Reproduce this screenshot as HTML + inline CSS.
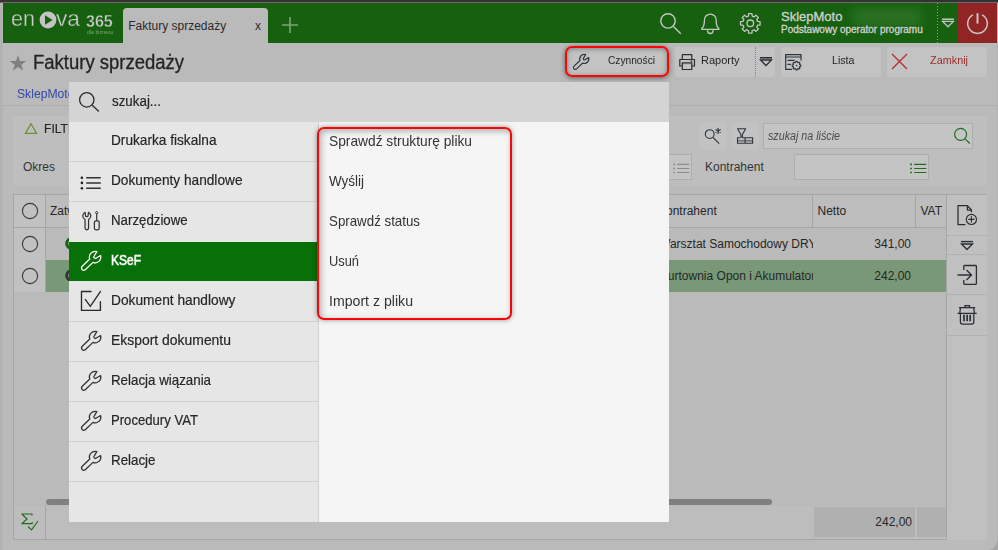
<!DOCTYPE html>
<html lang="pl"><head><meta charset="utf-8"><title>Faktury sprzedaży</title>
<style>
html,body{margin:0;padding:0;}
body{width:998px;height:550px;overflow:hidden;position:relative;background:#a6a6a6;font-family:"Liberation Sans", sans-serif;}
.a{position:absolute;box-sizing:border-box;}
.t{white-space:pre;display:block;}
svg{position:absolute;overflow:visible;}
</style></head><body>
<div class="a" style="left:3px;top:3px;width:994px;height:547px;background:#bababa;border-radius:0 0 9px 0;"></div>
<div class="a" style="left:0px;top:0px;width:998px;height:2px;background:#333333;"></div>
<div class="a" style="left:0px;top:2px;width:998px;height:1px;background:#6b696b;"></div>
<div class="a" style="left:3px;top:3px;width:994px;height:40px;background:#16600f;"></div>
<div class="a" style="left:852px;top:8px;width:70px;height:19px;background:rgba(62,128,54,0.5);filter:blur(5px);border-radius:6px;"></div>
<span class="t" style="position:absolute;left:11.40px;transform-origin:left top;top:7.95px;font-size:22.5px;line-height:22.5px;color:#cacaca;transform:scaleX(0.9588);-webkit-text-stroke:0.3px #16600f;">en</span>
<svg style="left:39px;top:11px;" width="18" height="18" viewBox="0 0 18 18"><circle cx="9" cy="9" r="8.4" fill="#c4c4c4"/><path d="M6 4.2 L13.6 9 L6 13.8 Z" fill="#16600f"/></svg>
<span class="t" style="position:absolute;left:55.80px;transform-origin:left top;top:7.95px;font-size:22.5px;line-height:22.5px;color:#cacaca;transform:scaleX(1.0099);-webkit-text-stroke:0.3px #16600f;">va</span>
<span class="t" style="position:absolute;left:86.20px;transform-origin:left top;top:13.66px;font-size:16px;line-height:16px;color:#cacaca;font-weight:700;transform:scaleX(1.0036);-webkit-text-stroke:0.35px #16600f;">365</span>
<span class="t" style="position:absolute;left:86.50px;transform-origin:left top;top:29.77px;font-size:5px;line-height:5px;color:#7da578;transform:scaleX(1.0476);">dla biznesu</span>
<div class="a" style="left:123px;top:8px;width:145px;height:35px;background:#bababa;border-radius:4px 4px 0 0;"></div>
<span class="t" style="position:absolute;left:128.20px;transform-origin:left top;top:19.84px;font-size:12px;line-height:12px;color:#2b2b2b;">Faktury sprzedaży</span>
<span class="t" style="position:absolute;left:255.00px;transform-origin:left top;top:19.84px;font-size:12px;line-height:12px;color:#2b2b2b;">x</span>
<svg style="left:281px;top:16px;" width="18" height="18" viewBox="0 0 18 18"><path d="M9 1 V17 M1 9 H17" stroke="#7fa57a" stroke-width="1.6" fill="none"/></svg>
<svg style="left:656px;top:10px;" width="28" height="26" viewBox="0 0 28 26"><circle cx="12" cy="10.9" r="7.2" fill="none" stroke="#c4c4c4" stroke-width="1.4"/><path d="M17.4 16.4 L24.8 23.8" stroke="#c4c4c4" stroke-width="1.4" fill="none"/></svg>
<svg style="left:698px;top:11px;" width="24" height="24" viewBox="0 0 24 24"><path d="M6.4 9 A5.9 5.9 0 0 1 18.2 9 L18.2 11 C18.4 14 19.5 16.5 20.8 17.6 L20.8 18.4 H3.8 L3.8 17.6 C5.1 16.5 6.2 14 6.4 11 Z M9.5 19.2 A2.8 3.3 0 0 0 15.1 19.2" fill="none" stroke="#c4c4c4" stroke-width="1.3" stroke-linejoin="round"/></svg>
<svg style="left:738px;top:10px;" width="26" height="26" viewBox="0 0 26 26"><path d="M22.05 11.60 L22.05 15.00 L19.56 15.17 L18.76 17.12 L20.40 18.99 L17.99 21.40 L16.12 19.76 L14.17 20.56 L14.00 23.05 L10.60 23.05 L10.43 20.56 L8.48 19.76 L6.61 21.40 L4.20 18.99 L5.84 17.12 L5.04 15.17 L2.55 15.00 L2.55 11.60 L5.04 11.43 L5.84 9.48 L4.20 7.61 L6.61 5.20 L8.48 6.84 L10.43 6.04 L10.60 3.55 L14.00 3.55 L14.17 6.04 L16.12 6.84 L17.99 5.20 L20.40 7.61 L18.76 9.48 L19.56 11.43 Z" fill="none" stroke="#c4c4c4" stroke-width="1.3" stroke-linejoin="round"/><circle cx="12.3" cy="13.3" r="3.3" fill="none" stroke="#c4c4c4" stroke-width="1.3"/></svg>
<span class="t" style="position:absolute;left:781.00px;transform-origin:left top;top:10.00px;font-size:13px;line-height:13px;color:#d2d2d2;-webkit-text-stroke:0.3px #d2d2d2;">SklepMoto</span>
<span class="t" style="position:absolute;left:781.00px;transform-origin:left top;top:24.54px;font-size:10px;line-height:10px;color:#d2d2d2;-webkit-text-stroke:0.3px #d2d2d2;">Podstawowy operator programu</span>
<div class="a" style="left:937px;top:3px;width:1px;height:40px;background:repeating-linear-gradient(to bottom, #86aa81 0px, #86aa81 1px, transparent 1px, transparent 3px);"></div>
<svg style="left:941px;top:16px;" width="16" height="12" viewBox="0 0 16 12"><path d="M1 3.2 H13" stroke="#c4c4c4" stroke-width="1.5"/><path d="M1.6 5.4 H12.4 L7 10.8 Z" fill="none" stroke="#c4c4c4" stroke-width="1.3"/></svg>
<div class="a" style="left:958px;top:3px;width:39px;height:40px;background:#912424;"></div>
<svg style="left:965px;top:11px;" width="26" height="26" viewBox="0 0 26 26"><path d="M7.9 3.95 A9.8 9.8 0 1 0 17.1 3.95" fill="none" stroke="#cfc3c3" stroke-width="1.5"/><path d="M12.5 2.2 V12.6" stroke="#cfc3c3" stroke-width="2"/></svg>
<div class="a" style="left:0px;top:3px;width:3px;height:547px;background:#b2b2b2;"></div>
<div class="a" style="left:996.5px;top:3px;width:1.5px;height:538px;background:#b2b2b2;"></div>
<svg style="left:9px;top:54px;" width="18" height="18" viewBox="0 0 18 18"><path d="M9.00 0.90 L11.00 6.90 L17.32 6.95 L12.23 10.70 L14.14 16.73 L9.00 13.05 L3.86 16.73 L5.77 10.70 L0.68 6.95 L7.00 6.90 Z" fill="#808080"/></svg>
<span class="t" style="position:absolute;left:33.20px;transform-origin:left top;top:52.96px;font-size:19.3px;line-height:19.3px;color:#242424;transform:scaleX(0.9585);-webkit-text-stroke:0.3px #242424;">Faktury sprzedaży</span>
<div class="a" style="left:567px;top:47px;width:101px;height:30px;background:#c3c3c3;border-radius:3px;"></div>
<div class="a" style="left:675px;top:47px;width:100px;height:30px;background:#c3c3c3;border-radius:3px;"></div>
<div class="a" style="left:781px;top:47px;width:100px;height:30px;background:#c3c3c3;border-radius:3px;"></div>
<div class="a" style="left:887px;top:47px;width:100px;height:30px;background:#c3c3c3;border-radius:3px;"></div>
<div class="a" style="left:564.7px;top:46.1px;width:104.59999999999991px;height:30.6px;border:2.8px solid #fb0505;border-radius:7px;box-shadow:0 1px 5px rgba(0,0,0,0.5), inset 0 1px 5px rgba(0,0,0,0.35);"></div>
<span class="t" style="position:absolute;left:607.60px;transform-origin:left top;top:55.27px;font-size:11.5px;line-height:11.5px;color:#262626;transform:scaleX(0.8857);">Czynności</span>
<span class="t" style="position:absolute;left:700.50px;transform-origin:left top;top:55.27px;font-size:11.5px;line-height:11.5px;color:#262626;transform:scaleX(0.9558);">Raporty</span>
<span class="t" style="position:absolute;left:832.00px;transform-origin:left top;top:55.27px;font-size:11.5px;line-height:11.5px;color:#262626;transform:scaleX(0.9260);">Lista</span>
<span class="t" style="position:absolute;left:929.50px;transform-origin:left top;top:55.27px;font-size:11.5px;line-height:11.5px;color:#9c2c2c;transform:scaleX(0.9437);">Zamknij</span>
<div class="a" style="left:755px;top:47px;width:1px;height:30px;border-left:1px dotted #858585;"></div>
<svg style="left:759px;top:56px;" width="14" height="11" viewBox="0 0 14 11"><path d="M1 1.8 H13" stroke="#2a2e33" stroke-width="1.6"/><path d="M1.5 4 H12.5 L7 9.5 Z" fill="none" stroke="#2a2e33" stroke-width="1.3"/></svg>
<svg style="left:573px;top:54px;" width="16" height="16" viewBox="0 0 20 20"><path d="M8.75 8.06 A5.7 5.7 0 0 1 15.84 0.67 L13.27 4.88 A1.45 1.45 0 0 0 15.29 6.97 L19.59 4.56 A5.7 5.7 0 0 1 11.94 11.38 L4.50 18.56 A2.3 2.3 0 0 1 1.30 15.24 Z" fill="none" stroke="#2c343c" stroke-width="1.5" stroke-linejoin="round"/></svg>
<svg style="left:679px;top:53px;" width="18" height="18" viewBox="0 0 18 18"><path d="M3.3 13 H0.8 V6.5 H15.5 V13 H12.8 M3.3 6.5 V1.6 H12.8 V6.5 M3.3 9.8 H12.8 V16.5 H3.3 Z M11.6 8.1 H13.2" fill="none" stroke="#2a2e33" stroke-width="1.2" stroke-linejoin="round"/><path d="M3.9 10.6 H12.2" stroke="#6a6e72" stroke-width="1"/></svg>
<svg style="left:785px;top:53px;" width="18" height="18" viewBox="0 0 18 18"><path d="M16 7.5 V1.6 H0.7 V16.4 H7 M0.7 4 H16 M2.5 7.3 H9.5 M2.5 11.3 H6" fill="none" stroke="#2c343c" stroke-width="1.2"/><path d="M15.74 11.86 L15.74 13.34 L14.79 13.45 L14.43 14.33 L15.02 15.07 L13.97 16.12 L13.23 15.53 L12.35 15.89 L12.24 16.84 L10.76 16.84 L10.65 15.89 L9.77 15.53 L9.03 16.12 L7.98 15.07 L8.57 14.33 L8.21 13.45 L7.26 13.34 L7.26 11.86 L8.21 11.75 L8.57 10.87 L7.98 10.13 L9.03 9.08 L9.77 9.67 L10.65 9.31 L10.76 8.36 L12.24 8.36 L12.35 9.31 L13.23 9.67 L13.97 9.08 L15.02 10.13 L14.43 10.87 L14.79 11.75 Z" fill="none" stroke="#2c343c" stroke-width="1.1" stroke-linejoin="round"/><circle cx="11.5" cy="12.6" r="0.8" fill="#2c343c"/></svg>
<svg style="left:891px;top:53px;" width="17" height="17" viewBox="0 0 17 17"><path d="M1 1 L16 16 M16 1 L1 16" stroke="#b23030" stroke-width="1.4"/></svg>
<span class="t" style="position:absolute;left:17.30px;transform-origin:left top;top:88.42px;font-size:12.5px;line-height:12.5px;color:#3347a8;transform:scaleX(0.9735);">SklepMoto</span>
<div class="a" style="left:3px;top:105px;width:994px;height:1px;background:#adadad;"></div>
<div class="a" style="left:13px;top:116px;width:974px;height:70px;background:#bebebe;border-radius:4px;"></div>
<svg style="left:23px;top:121px;" width="15" height="13" viewBox="0 0 15 13"><path d="M8 2.8 L13.6 12.4 H2.4 Z" fill="none" stroke="#6c8f30" stroke-width="1.2"/></svg>
<span class="t" style="position:absolute;left:44.00px;transform-origin:left top;top:121.74px;font-size:13.3px;line-height:13.3px;color:#262626;transform:scaleX(0.9085);-webkit-text-stroke:0.2px #262626;">FILTRY</span>
<span class="t" style="position:absolute;left:23.00px;transform-origin:left top;top:160.84px;font-size:12px;line-height:12px;color:#333;">Okres</span>
<div class="a" style="left:699px;top:122.5px;width:28px;height:26.5px;background:#c2c2c2;border-radius:2px;"></div>
<div class="a" style="left:732px;top:122.5px;width:26.5px;height:26.5px;background:#c2c2c2;border-radius:2px;"></div>
<svg style="left:703px;top:126px;" width="22" height="20" viewBox="0 0 22 20"><circle cx="6.7" cy="8.1" r="4.4" fill="none" stroke="#2c343c" stroke-width="1.1"/><path d="M9.9 11.3 L16.2 17.6" stroke="#2c343c" stroke-width="1.1"/><path d="M15.1 2 V8 M12.5 3.5 L17.7 6.5 M17.7 3.5 L12.5 6.5" stroke="#2c343c" stroke-width="1.1"/></svg>
<svg style="left:736px;top:126px;" width="20" height="20" viewBox="0 0 20 20"><path d="M1.6 2.7 H9.6 L6.4 8.6 V11.4 L4.9 10.4 V8.6 Z" fill="none" stroke="#2c343c" stroke-width="1.1" stroke-linejoin="round"/><path d="M1.9 13.9 H16.2 V15.6 H1.9 Z" fill="#707478"/><path d="M4.9 11.7 H1.5 V17.2 H16.6 V11.7 H6.4 M9.1 11.7 V17.2" fill="none" stroke="#2c343c" stroke-width="1.1"/></svg>
<div class="a" style="left:763px;top:123px;width:210px;height:26px;background:#c4c4c4;border:1px solid #aeaeae;"></div>
<span class="t" style="position:absolute;left:768.00px;transform-origin:left top;top:129.84px;font-size:12px;line-height:12px;color:#4c4c4c;font-style:italic;transform:scaleX(0.8922);">szukaj na liście</span>
<svg style="left:952px;top:126px;" width="20" height="20" viewBox="0 0 20 20"><circle cx="8.6" cy="8.3" r="6" fill="none" stroke="#1f6d1a" stroke-width="1.15"/><path d="M12.9 12.6 L17.8 17.5" stroke="#1f6d1a" stroke-width="1.15"/></svg>
<div class="a" style="left:600px;top:154px;width:92px;height:26px;background:#c4c4c4;border:1px solid #aeaeae;"></div>
<svg style="left:672.6px;top:163px;" width="18" height="12" viewBox="0 0 18 12"><path d="M4.2 1.4 H16.3 M4.2 5.5 H16.3 M4.2 9.5 H16.3" stroke="#8c8c8c" stroke-width="1.15"/><path d="M0.2 1.4 H1.9 M0.2 5.5 H1.9 M0.2 9.5 H1.9" stroke="#8c8c8c" stroke-width="1.7"/></svg>
<span class="t" style="position:absolute;left:705.00px;transform-origin:left top;top:160.84px;font-size:12px;line-height:12px;color:#333;">Kontrahent</span>
<div class="a" style="left:794px;top:154px;width:135px;height:26px;background:#c4c4c4;border:1px solid #aeaeae;"></div>
<svg style="left:910px;top:163px;" width="18" height="12" viewBox="0 0 18 12"><path d="M4.2 1.4 H16.3 M4.2 5.5 H16.3 M4.2 9.5 H16.3" stroke="#1f6d1a" stroke-width="1.15"/><path d="M0.2 1.4 H1.9 M0.2 5.5 H1.9 M0.2 9.5 H1.9" stroke="#1f6d1a" stroke-width="1.7"/></svg>
<div class="a" style="left:13px;top:194px;width:934px;height:346px;background:#bababa;border:1px solid #a6a6a6;"></div>
<div class="a" style="left:14px;top:195px;width:31px;height:97px;background:#c1c1c1;"></div>
<div class="a" style="left:45px;top:195px;width:1px;height:97px;background:#a6a6a6;"></div>
<div class="a" style="left:46px;top:195px;width:900px;height:32px;background:#bdbdbd;"></div>
<div class="a" style="left:14px;top:227px;width:932px;height:1px;background:#a6a6a6;"></div>
<div class="a" style="left:652px;top:195px;width:1px;height:32px;background:#a6a6a6;"></div>
<div class="a" style="left:812px;top:195px;width:1px;height:32px;background:#a6a6a6;"></div>
<div class="a" style="left:915px;top:195px;width:1px;height:32px;background:#a6a6a6;"></div>
<div class="a" style="left:46px;top:260px;width:900px;height:32px;background:#789878;"></div>
<svg style="left:21px;top:202px;" width="18" height="18" viewBox="0 0 18 18"><circle cx="9" cy="9" r="7.6" fill="none" stroke="#3a3a3a" stroke-width="1.1"/></svg>
<svg style="left:21px;top:235px;" width="18" height="18" viewBox="0 0 18 18"><circle cx="9" cy="9" r="7.6" fill="none" stroke="#3a3a3a" stroke-width="1.1"/></svg>
<svg style="left:21px;top:267px;" width="18" height="18" viewBox="0 0 18 18"><circle cx="9" cy="9" r="7.6" fill="none" stroke="#3a3a3a" stroke-width="1.1"/></svg>
<span class="t" style="position:absolute;left:50.00px;transform-origin:left top;top:204.84px;font-size:12px;line-height:12px;color:#262626;">Zatw.</span>
<span class="t" style="position:absolute;left:658.00px;transform-origin:left top;top:204.84px;font-size:12px;line-height:12px;color:#262626;">Kontrahent</span>
<span class="t" style="position:absolute;left:817.50px;transform-origin:left top;top:204.84px;font-size:12px;line-height:12px;color:#262626;">Netto</span>
<span class="t" style="position:absolute;left:920.50px;transform-origin:left top;top:204.84px;font-size:12px;line-height:12px;color:#262626;">VAT</span>
<svg style="left:64px;top:236px;" width="16" height="16" viewBox="0 0 16 16"><circle cx="7.7" cy="7.5" r="5" fill="#a9c9a4" stroke="#146014" stroke-width="3"/></svg>
<svg style="left:64px;top:268px;" width="16" height="16" viewBox="0 0 16 16"><circle cx="7.7" cy="7.5" r="5" fill="#9a9a9a" stroke="#333" stroke-width="3"/></svg>
<div class="a" style="left:653px;top:228px;width:159.6px;height:64px;overflow:hidden;">
<span class="t" style="position:absolute;left:6.00px;transform-origin:left top;top:10.04px;font-size:12px;line-height:12px;color:#262626;">Warsztat Samochodowy DRYF</span>
<span class="t" style="position:absolute;left:6.20px;transform-origin:left top;top:41.54px;font-size:12px;line-height:12px;color:#262626;">Hurtownia Opon i Akumulatorów</span>
</div>
<span class="t" style="position:absolute;right:87.00px;transform-origin:right top;top:238.04px;font-size:12px;line-height:12px;color:#262626;">341,00</span>
<span class="t" style="position:absolute;right:87.00px;transform-origin:right top;top:269.54px;font-size:12px;line-height:12px;color:#262626;">242,00</span>
<div class="a" style="left:46px;top:499px;width:726px;height:6px;background:#808080;border-radius:3px;"></div>
<div class="a" style="left:14px;top:506px;width:932px;height:33px;background:#bdbdbd;"></div>
<div class="a" style="left:45px;top:506px;width:1px;height:33px;background:#a6a6a6;"></div>
<div class="a" style="left:814px;top:507px;width:101px;height:30px;background:#b0b0b0;"></div>
<div class="a" style="left:917px;top:507px;width:29px;height:30px;background:#b0b0b0;"></div>
<span class="t" style="position:absolute;right:86.00px;transform-origin:right top;top:515.84px;font-size:12px;line-height:12px;color:#262626;">242,00</span>
<svg style="left:21px;top:512px;" width="20" height="20" viewBox="0 0 20 20"><path d="M11 3.6 V2 H0.9 L6 7 L0.9 11.6 H11.2 V10" fill="none" stroke="#1f6d1a" stroke-width="1.15" stroke-linejoin="round"/><path d="M7 14.5 L10.5 17.8 L17 9" fill="none" stroke="#1f6d1a" stroke-width="1.15"/></svg>
<div class="a" style="left:947px;top:194px;width:40px;height:346px;background:#c0c0c0;border-top:1px solid #a9a9a9;"></div>
<div class="a" style="left:947px;top:235px;width:40px;height:1px;border-top:1px dotted #a6a6a6;"></div>
<div class="a" style="left:947px;top:254px;width:40px;height:1px;background:#b0b0b0;"></div>
<div class="a" style="left:947px;top:294px;width:40px;height:1px;background:#b0b0b0;"></div>
<div class="a" style="left:947px;top:335px;width:40px;height:1px;background:#b0b0b0;"></div>
<svg style="left:956px;top:203px;" width="22" height="24" viewBox="0 0 22 24"><path d="M9.4 21.6 H2 V2.6 H11.4 L15.4 7 V9.2 M11.4 2.6 V7 H15.4" fill="none" stroke="#2a2e33" stroke-width="1.25" stroke-linejoin="round"/><circle cx="15.4" cy="16.4" r="5.1" fill="none" stroke="#2a2e33" stroke-width="1.15"/><path d="M15.4 13.3 V19.5 M12.3 16.4 H18.5" stroke="#2a2e33" stroke-width="1.15"/></svg>
<svg style="left:960px;top:240px;" width="14" height="11" viewBox="0 0 14 11"><path d="M1 1.6 H13" stroke="#2a2e33" stroke-width="1.4"/><path d="M1.5 4 H12.5 L7 9.5 Z" fill="none" stroke="#2a2e33" stroke-width="1.3"/></svg>
<svg style="left:956px;top:264px;" width="22" height="22" viewBox="0 0 22 22"><path d="M7.8 6 V2.3 Q7.8 1.5 8.6 1.5 H19.6 Q20.4 1.5 20.4 2.3 V19.6 Q20.4 20.4 19.6 20.4 H8.6 Q7.8 20.4 7.8 19.6 V16" fill="none" stroke="#2a2e33" stroke-width="1.3"/><path d="M1.5 11 H15 M10.5 6 L15.5 11 L10.5 16" fill="none" stroke="#2a2e33" stroke-width="1.3"/></svg>
<svg style="left:956px;top:304px;" width="22" height="22" viewBox="0 0 22 22"><path d="M9 3.6 V1.6 H13.5 V3.6 M3 3.7 H19.2 M1.5 9.4 H20.7 M4.4 3.9 L3.8 9.4 M17.8 3.9 L18.4 9.4 M4.4 9.4 V18 Q4.4 20 6.4 20 H15.8 Q17.8 20 17.8 18 V9.4" fill="none" stroke="#2a2e33" stroke-width="1.25"/><path d="M8 10.8 V17.2 M11.1 10.8 V17.2 M14.2 10.8 V17.2" stroke="#2a2e33" stroke-width="1.7"/></svg>
<div class="a" style="left:69px;top:82px;width:600px;height:40px;background:#d4d4d4;"></div>
<div class="a" style="left:69px;top:122px;width:249px;height:400px;background:#e6e6e6;"></div>
<div class="a" style="left:318px;top:122px;width:1px;height:400px;background:#d0d0d0;"></div>
<div class="a" style="left:319px;top:122px;width:350px;height:400px;background:#f5f5f5;"></div>
<svg style="left:76px;top:88px;" width="26" height="26" viewBox="0 0 26 26"><circle cx="10.8" cy="11.8" r="7.2" fill="none" stroke="#2a2a2a" stroke-width="1.25"/><path d="M16 17 L22.8 23.5" stroke="#2a2a2a" stroke-width="1.25"/></svg>
<span class="t" style="position:absolute;left:111.50px;transform-origin:left top;top:94.15px;font-size:14px;line-height:14px;color:#262626;transform:scaleX(0.9541);-webkit-text-stroke:0.2px #262626;">szukaj...</span>
<span class="t" style="position:absolute;left:110.60px;transform-origin:left top;top:132.00px;font-size:15px;line-height:15px;color:#262626;transform:scaleX(0.9103);-webkit-text-stroke:0.2px #262626;">Drukarka fiskalna</span>
<div class="a" style="left:69px;top:161px;width:249px;height:1px;background:#d2d2d2;"></div>
<span class="t" style="position:absolute;left:110.60px;transform-origin:left top;top:172.00px;font-size:15px;line-height:15px;color:#262626;transform:scaleX(0.9115);-webkit-text-stroke:0.2px #262626;">Dokumenty handlowe</span>
<div class="a" style="left:69px;top:201px;width:249px;height:1px;background:#d2d2d2;"></div>
<span class="t" style="position:absolute;left:110.60px;transform-origin:left top;top:212.00px;font-size:15px;line-height:15px;color:#262626;transform:scaleX(0.8845);-webkit-text-stroke:0.2px #262626;">Narzędziowe</span>
<div class="a" style="left:69px;top:242px;width:249px;height:39px;background:#087008;"></div>
<span class="t" style="position:absolute;left:110.60px;transform-origin:left top;top:252.00px;font-size:15px;line-height:15px;color:#ffffff;transform:scaleX(0.7997);-webkit-text-stroke:0.55px #ffffff;">KSeF</span>
<div class="a" style="left:69px;top:281px;width:249px;height:1px;background:#e6e6e6;"></div>
<span class="t" style="position:absolute;left:110.60px;transform-origin:left top;top:292.00px;font-size:15px;line-height:15px;color:#262626;transform:scaleX(0.9160);-webkit-text-stroke:0.2px #262626;">Dokument handlowy</span>
<div class="a" style="left:69px;top:321px;width:249px;height:1px;background:#d2d2d2;"></div>
<span class="t" style="position:absolute;left:110.60px;transform-origin:left top;top:332.00px;font-size:15px;line-height:15px;color:#262626;transform:scaleX(0.9284);-webkit-text-stroke:0.2px #262626;">Eksport dokumentu</span>
<div class="a" style="left:69px;top:361px;width:249px;height:1px;background:#d2d2d2;"></div>
<span class="t" style="position:absolute;left:110.60px;transform-origin:left top;top:372.00px;font-size:15px;line-height:15px;color:#262626;transform:scaleX(0.8884);-webkit-text-stroke:0.2px #262626;">Relacja wiązania</span>
<div class="a" style="left:69px;top:401px;width:249px;height:1px;background:#d2d2d2;"></div>
<span class="t" style="position:absolute;left:110.60px;transform-origin:left top;top:412.00px;font-size:15px;line-height:15px;color:#262626;transform:scaleX(0.8745);-webkit-text-stroke:0.2px #262626;">Procedury VAT</span>
<div class="a" style="left:69px;top:441px;width:249px;height:1px;background:#d2d2d2;"></div>
<span class="t" style="position:absolute;left:110.60px;transform-origin:left top;top:452.00px;font-size:15px;line-height:15px;color:#262626;transform:scaleX(0.8894);-webkit-text-stroke:0.2px #262626;">Relacje</span>
<div class="a" style="left:69px;top:481px;width:249px;height:1px;background:#d2d2d2;"></div>
<svg style="left:80px;top:176px;" width="22" height="14" viewBox="0 0 22 14"><path d="M6.2 1.7 H20.8 M6.2 6.9 H20.8 M6.2 12.2 H20.8" stroke="#333" stroke-width="1.5"/><circle cx="1.9" cy="1.7" r="1.3" fill="#222"/><circle cx="1.9" cy="6.9" r="1.3" fill="#222"/><circle cx="1.9" cy="12.2" r="1.3" fill="#222"/></svg>
<svg style="left:81px;top:210px;" width="20" height="22" viewBox="0 0 20 22"><path d="M4.05 9.50 A4.0 4.0 0 0 1 4.10 2.28 L4.50 5.40 A1.3 1.3 0 0 0 7.10 5.40 L7.50 2.28 A4.0 4.0 0 0 1 7.55 9.50 L7.55 18.00 A1.75 1.75 0 0 1 4.05 18.00 Z" fill="none" stroke="#333" stroke-width="1.25" stroke-linejoin="round"/><circle cx="15.7" cy="2.7" r="1.1" fill="none" stroke="#333" stroke-width="1"/><path d="M15.7 3.8 V10.9" stroke="#333" stroke-width="1.2"/><rect x="13.4" y="10.9" width="4.8" height="8.9" rx="1.5" fill="none" stroke="#333" stroke-width="1.25"/></svg>
<svg style="left:80.9px;top:250.7px;" width="20" height="20" viewBox="0 0 20 20"><path d="M8.75 8.06 A5.7 5.7 0 0 1 15.84 0.67 L13.27 4.88 A1.45 1.45 0 0 0 15.29 6.97 L19.59 4.56 A5.7 5.7 0 0 1 11.94 11.38 L4.50 18.56 A2.3 2.3 0 0 1 1.30 15.24 Z" fill="none" stroke="#ffffff" stroke-width="1.25" stroke-linejoin="round"/></svg>
<svg style="left:81px;top:291px;" width="21" height="21" viewBox="0 0 21 21"><path d="M10.6 0.5 H0.5 V19.3 H19.4 V10.3" fill="none" stroke="#2a2a2a" stroke-width="1.35"/><path d="M4.1 8.1 L9.3 15.4 L19.7 0.1" fill="none" stroke="#2a2a2a" stroke-width="1.35"/></svg>
<svg style="left:80.9px;top:330.7px;" width="20" height="20" viewBox="0 0 20 20"><path d="M8.75 8.06 A5.7 5.7 0 0 1 15.84 0.67 L13.27 4.88 A1.45 1.45 0 0 0 15.29 6.97 L19.59 4.56 A5.7 5.7 0 0 1 11.94 11.38 L4.50 18.56 A2.3 2.3 0 0 1 1.30 15.24 Z" fill="none" stroke="#333" stroke-width="1.25" stroke-linejoin="round"/></svg>
<svg style="left:80.9px;top:370.7px;" width="20" height="20" viewBox="0 0 20 20"><path d="M8.75 8.06 A5.7 5.7 0 0 1 15.84 0.67 L13.27 4.88 A1.45 1.45 0 0 0 15.29 6.97 L19.59 4.56 A5.7 5.7 0 0 1 11.94 11.38 L4.50 18.56 A2.3 2.3 0 0 1 1.30 15.24 Z" fill="none" stroke="#333" stroke-width="1.25" stroke-linejoin="round"/></svg>
<svg style="left:80.9px;top:410.7px;" width="20" height="20" viewBox="0 0 20 20"><path d="M8.75 8.06 A5.7 5.7 0 0 1 15.84 0.67 L13.27 4.88 A1.45 1.45 0 0 0 15.29 6.97 L19.59 4.56 A5.7 5.7 0 0 1 11.94 11.38 L4.50 18.56 A2.3 2.3 0 0 1 1.30 15.24 Z" fill="none" stroke="#333" stroke-width="1.25" stroke-linejoin="round"/></svg>
<svg style="left:80.9px;top:450.7px;" width="20" height="20" viewBox="0 0 20 20"><path d="M8.75 8.06 A5.7 5.7 0 0 1 15.84 0.67 L13.27 4.88 A1.45 1.45 0 0 0 15.29 6.97 L19.59 4.56 A5.7 5.7 0 0 1 11.94 11.38 L4.50 18.56 A2.3 2.3 0 0 1 1.30 15.24 Z" fill="none" stroke="#333" stroke-width="1.25" stroke-linejoin="round"/></svg>
<span class="t" style="position:absolute;left:329.00px;transform-origin:left top;top:132.80px;font-size:15px;line-height:15px;color:#333;transform:scaleX(0.9172);">Sprawdź strukturę pliku</span>
<span class="t" style="position:absolute;left:329.00px;transform-origin:left top;top:172.80px;font-size:15px;line-height:15px;color:#333;transform:scaleX(0.8967);">Wyślij</span>
<span class="t" style="position:absolute;left:329.00px;transform-origin:left top;top:212.80px;font-size:15px;line-height:15px;color:#333;transform:scaleX(0.8874);">Sprawdź status</span>
<span class="t" style="position:absolute;left:329.00px;transform-origin:left top;top:252.80px;font-size:15px;line-height:15px;color:#333;transform:scaleX(0.8564);">Usuń</span>
<span class="t" style="position:absolute;left:329.00px;transform-origin:left top;top:292.80px;font-size:15px;line-height:15px;color:#333;transform:scaleX(0.9417);">Import z pliku</span>
<div class="a" style="left:316.6px;top:127.2px;width:195.2px;height:193.2px;border:2.4px solid #fb0505;border-radius:7px;box-shadow:0 0 5px rgba(0,0,0,0.4), inset 2px 2px 6px rgba(0,0,0,0.3);"></div>
</body></html>
